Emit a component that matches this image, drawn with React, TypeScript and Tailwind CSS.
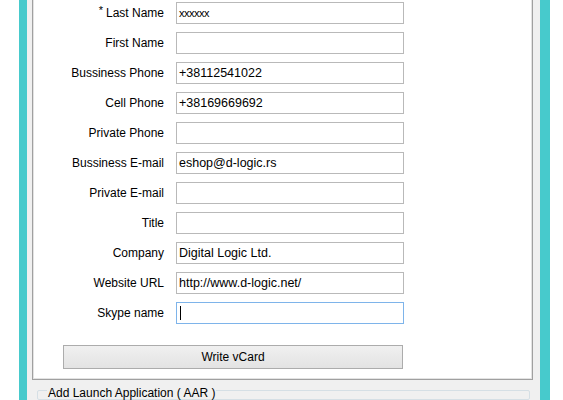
import React from "react";

type Field = {
  label: string;
  value: string;
  required?: boolean;
  focused?: boolean;
};

const fields: Field[] = [
  { label: "Last Name", value: "xxxxxx", required: true },
  { label: "First Name", value: "" },
  { label: "Bussiness Phone", value: "+38112541022" },
  { label: "Cell Phone", value: "+38169669692" },
  { label: "Private Phone", value: "" },
  { label: "Bussiness E-mail", value: "eshop@d-logic.rs" },
  { label: "Private E-mail", value: "" },
  { label: "Title", value: "" },
  { label: "Company", value: "Digital Logic Ltd." },
  { label: "Website URL", value: "http://www.d-logic.net/" },
  { label: "Skype name", value: "", focused: true },
];

export default function App() {
  return (
    <div
      className="w-[563px] h-[400px] bg-white flex overflow-hidden text-black"
      style={{ fontFamily: '"Liberation Sans", Arial, sans-serif' }}
    >
      <div className="w-[19px] shrink-0" />
      <div className="w-[8px] shrink-0 bg-[#47cacc]" />

      {/* window body */}
      <div className="w-[513px] shrink-0 bg-[#f0f0f0] flex flex-col pl-[5px] pr-[7px]">
        <div className="h-[380px] shrink-0 bg-white border-l border-r border-b border-[#a0a0a0] shadow-[inset_1px_0_0_#e3e3e3,inset_-1px_0_0_#e3e3e3,inset_0_-1px_0_#e3e3e3] pt-[2px]">
          <div className="grid grid-cols-[131px_228px] gap-x-3 gap-y-2">
            {fields.map((f) => (
              <React.Fragment key={f.label}>
                <div className="h-[22px] flex items-center justify-end text-[12px] leading-none">
                  {f.required && <span className="relative -top-[3px] mr-[3px] text-[11px]">*</span>}
                  {f.label}
                </div>
                <div
                  className={`h-[22px] border bg-white flex items-center px-[2px] text-[12.5px] leading-none ${
                    f.focused ? "border-[#7eb4ea]" : "border-[#b9b9b9]"
                  }`}
                >
                  {f.value && (
                    <span className={f.label === "Last Name" ? "text-[11px] tracking-[-0.5px]" : ""}>{f.value}</span>
                  )}
                  {f.focused && <span className="w-px h-[14px] bg-black ml-[1px]" />}
                </div>
              </React.Fragment>
            ))}
          </div>

          <button className="ml-[30px] mt-[21px] w-[340px] h-[24px] border border-[#acacac] bg-gradient-to-b from-[#f0f0f0] to-[#e3e3e3] text-[12px] leading-none">
            Write vCard
          </button>
        </div>

        <div className="relative mt-[10px] ml-[5px] w-[493px] h-[20px] border border-[#d5dfe5] rounded-[2px]">
          <span className="absolute -top-[4px] left-[9px] bg-[#f0f0f0] px-[1px] text-[12px] leading-none">
            Add Launch Application ( AAR )
          </span>
        </div>
      </div>

      <div className="w-[10px] shrink-0 bg-[#47cacc]" />
    </div>
  );
}
